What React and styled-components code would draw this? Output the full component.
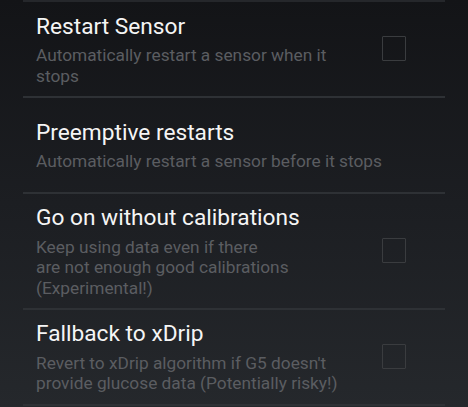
import React from 'react';
import styled, { createGlobalStyle } from 'styled-components';

const GlobalStyle = createGlobalStyle`
  html, body {
    margin: 0;
    padding: 0;
    height: 100%;
  }
  body {
    background: linear-gradient(180deg, #131417 0%, #1c1e22 50%, #25282c 100%);
    font-family: Roboto, "Noto Sans", sans-serif;
    overflow: hidden;
  }
`;

const Screen = styled.div`
  width: 468px;
  height: 407px;
  padding: 0 23px;
  box-sizing: border-box;
`;

const List = styled.div`
  display: flex;
  flex-direction: column;
  border-top: 2px solid #25272b;
`;

const Row = styled.div`
  display: flex;
  align-items: center;
  min-height: 95.8px;
  padding: 9.6px 39px 9.6px 13px;
  box-sizing: border-box;
  border-bottom: 2px solid #2e3135;
`;

const Text = styled.div`
  flex: 1;
  display: flex;
  flex-direction: column;
`;

const Title = styled.div`
  color: #f5f5f5;
  font-size: 22.7px;
  line-height: 30px;
  margin-bottom: 3.5px;
`;

const Summary = styled.div`
  color: #5b5d61;
  font-size: 17.3px;
  line-height: 20.5px;
  white-space: pre-line;
`;

const Checkbox = styled.div`
  width: 24px;
  height: 25px;
  border: 1px solid #3a3c3f;
  border-radius: 1px;
  box-sizing: border-box;
  flex-shrink: 0;
  margin-left: 8px;
`;

const prefs = [
  {
    title: 'Restart Sensor',
    summary: 'Automatically restart a sensor when it\nstops',
    checkbox: true,
  },
  {
    title: 'Preemptive restarts',
    summary: 'Automatically restart a sensor before it stops',
    checkbox: false,
  },
  {
    title: 'Go on without calibrations',
    summary: 'Keep using data even if there\nare not enough good calibrations\n(Experimental!)',
    checkbox: true,
  },
  {
    title: 'Fallback to xDrip',
    summary: "Revert to xDrip algorithm if G5 doesn't\nprovide glucose data (Potentially risky!)",
    checkbox: true,
  },
];

export default function App() {
  return (
    <>
      <GlobalStyle />
      <Screen>
        <List>
          {prefs.map((p) => (
            <Row key={p.title}>
              <Text>
                <Title>{p.title}</Title>
                <Summary>{p.summary}</Summary>
              </Text>
              {p.checkbox && <Checkbox />}
            </Row>
          ))}
        </List>
      </Screen>
    </>
  );
}
